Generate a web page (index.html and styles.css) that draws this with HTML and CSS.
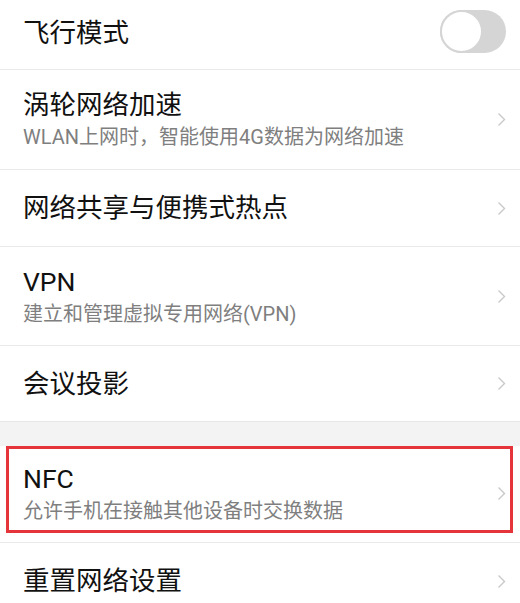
FILE: index.html
```html
<!DOCTYPE html>
<html lang="zh-CN">
<head>
<meta charset="utf-8">
<title>网络设置</title>
<link rel="stylesheet" href="styles.css">
</head>
<body>
<div class="list">
  <div class="row row-first">
    <div class="text"><div class="title">飞行模式</div></div>
    <div class="toggle"><div class="knob"></div></div>
  </div>
  <div class="row row-two">
    <div class="text">
      <div class="title">涡轮网络加速</div>
      <div class="sub">WLAN上网时，智能使用4G数据为网络加速</div>
    </div>
    <svg class="chev" width="9" height="15" viewBox="0 0 9 15"><polyline points="1.5,1.5 7.5,7.5 1.5,13.5" fill="none" stroke="#c9c9c9" stroke-width="1.4"/></svg>
  </div>
  <div class="row row-one">
    <div class="text"><div class="title">网络共享与便携式热点</div></div>
    <svg class="chev" width="9" height="15" viewBox="0 0 9 15"><polyline points="1.5,1.5 7.5,7.5 1.5,13.5" fill="none" stroke="#c9c9c9" stroke-width="1.4"/></svg>
  </div>
  <div class="row row-two row-vpn">
    <div class="text">
      <div class="title">VPN</div>
      <div class="sub">建立和管理虚拟专用网络(VPN)</div>
    </div>
    <svg class="chev" width="9" height="15" viewBox="0 0 9 15"><polyline points="1.5,1.5 7.5,7.5 1.5,13.5" fill="none" stroke="#c9c9c9" stroke-width="1.4"/></svg>
  </div>
  <div class="row row-one row-last-in-group">
    <div class="text"><div class="title">会议投影</div></div>
    <svg class="chev" width="9" height="15" viewBox="0 0 9 15"><polyline points="1.5,1.5 7.5,7.5 1.5,13.5" fill="none" stroke="#c9c9c9" stroke-width="1.4"/></svg>
  </div>
  <div class="band"></div>
  <div class="row row-two row-nfc">
    <div class="text">
      <div class="title">NFC</div>
      <div class="sub">允许手机在接触其他设备时交换数据</div>
    </div>
    <svg class="chev" width="9" height="15" viewBox="0 0 9 15"><polyline points="1.5,1.5 7.5,7.5 1.5,13.5" fill="none" stroke="#c9c9c9" stroke-width="1.4"/></svg>
    <div class="highlight"></div>
  </div>
  <div class="row row-one">
    <div class="text"><div class="title">重置网络设置</div></div>
    <svg class="chev" width="9" height="15" viewBox="0 0 9 15"><polyline points="1.5,1.5 7.5,7.5 1.5,13.5" fill="none" stroke="#c9c9c9" stroke-width="1.4"/></svg>
  </div>
</div>
</body>
</html>
```
FILE: styles.css
```css
html, body {
  margin: 0;
  padding: 0;
  background: #ffffff;
  overflow: hidden;
}
body {
  width: 520px;
  height: 603px;
  font-family: Roboto, "Noto Sans CJK SC", sans-serif;
  color: #1a1a1a;
}
.list {
  display: flex;
  flex-direction: column;
}
.row {
  position: relative;
  display: flex;
  align-items: center;
  justify-content: space-between;
  padding: 0 14px 0 23px;
  border-bottom: 1px solid #e9e9e9;
  box-sizing: border-box;
}
.row-first {
  height: 70px;
  padding-bottom: 4px;
}
.row-one {
  height: 77px;
}
.row-two {
  height: 100px;
}
.row-vpn {
  height: 99px;
}
.row-last-in-group {
  height: 76px;
  border-bottom: 1px solid #e6e6e6;
}
.row-nfc {
  height: 97px;
  padding-bottom: 2px;
}
.text {
  display: flex;
  flex-direction: column;
}
.title {
  font-size: 26.5px;
  line-height: 32px;
  color: #111111;
}
.sub {
  font-size: 20px;
  line-height: 26px;
  color: #7f7f7f;
  margin-top: 3px;
}
.chev {
  flex: none;
}
.row-first .toggle {
  margin-bottom: 2px;
}
.toggle {
  width: 66px;
  height: 43px;
  border-radius: 22px;
  background: #d5d5d5;
  position: relative;
}
.knob {
  position: absolute;
  left: 0;
  top: 0;
  width: 43px;
  height: 43px;
  box-sizing: border-box;
  border-radius: 50%;
  background: #ffffff;
  border: 2px solid #d5d5d5;
}
.band {
  height: 24px;
  background: #f3f3f3;
}
.highlight {
  position: absolute;
  left: 6px;
  right: 7px;
  top: 0;
  height: 87px;
  box-sizing: border-box;
  border: 3px solid #e5353b;
}
```
